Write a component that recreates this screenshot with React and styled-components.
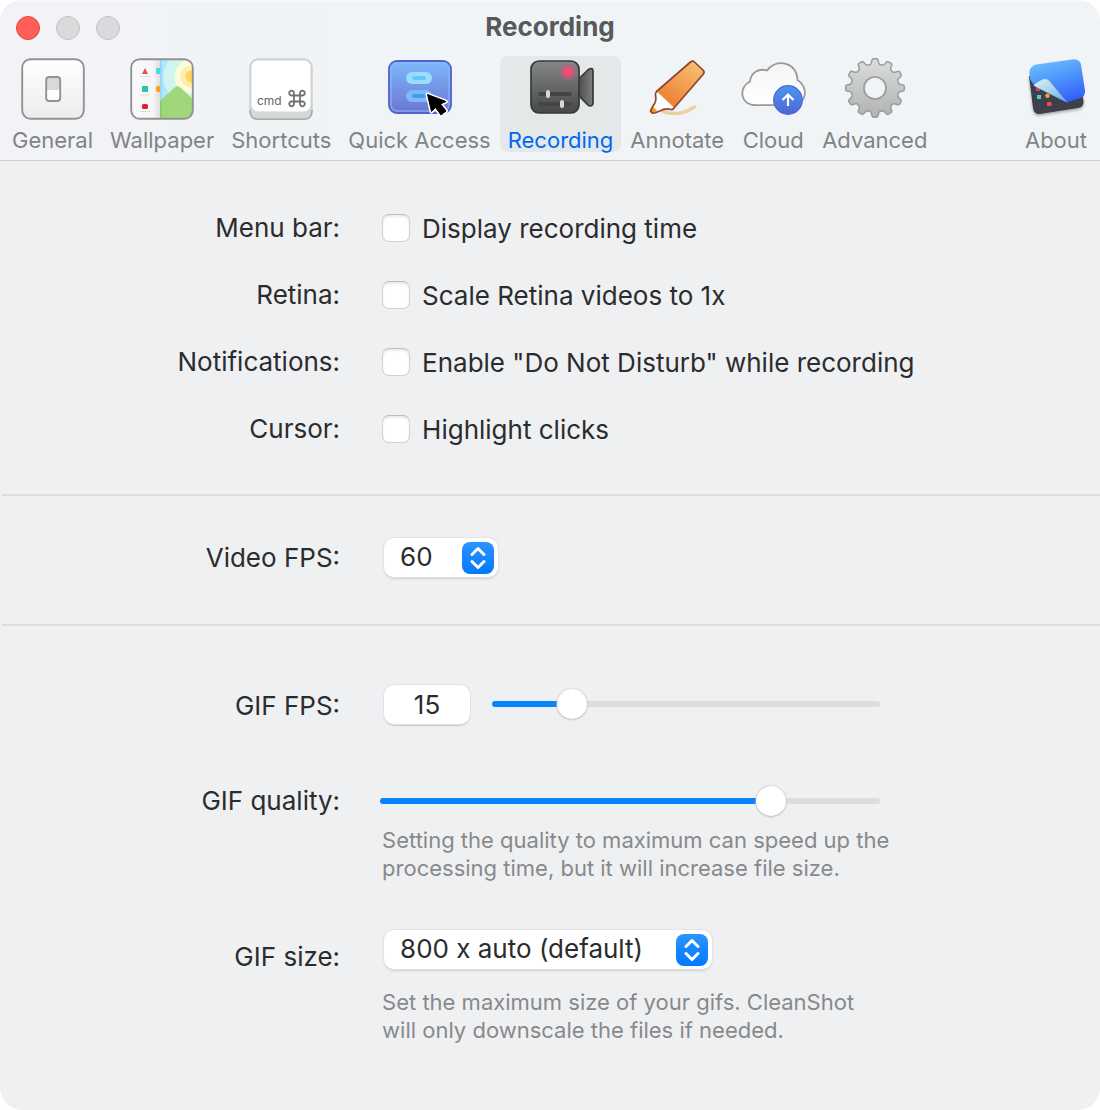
import React, { useState } from "react";
import styled, { createGlobalStyle } from "styled-components";

const GlobalStyle = createGlobalStyle`
  *, *::before, *::after { box-sizing: border-box; }
  body {
    margin: 0;
    background: #fff;
    color: #2b2c2e;
    font-family: Inter, "Liberation Sans", sans-serif;
    font-size: 26px;
    line-height: 28px;
  }
  button, input, select { margin: 0; font: inherit; color: inherit; }
`;

const Window = styled.main`
  min-height: 100vh;
  overflow: hidden;
  border-radius: 22px;
  background: #eff0f2;
`;

const Header = styled.header`
  padding: 12px 4px 8px;
  border-bottom: 1px solid #c9cbcd;
  background: linear-gradient(90deg, #f2f3f6, #f0f4f6 30%, #f0f4f6);
  box-shadow: inset 0 2px 0 #f7f8f9;
`;

const TitleBar = styled.div`
  display: grid;
  grid-template-columns: 1fr auto 1fr;
  align-items: center;
  height: 32px;
  margin-bottom: 12px;
  padding: 0 12px;
`;

const Lights = styled.div`
  display: flex;
  gap: 16px;
`;

const Light = styled.button`
  width: 24px;
  height: 24px;
  padding: 0;
  border: 1px solid ${(p) => (p.$active ? "#e2463f" : "#bfc0c1")};
  border-radius: 50%;
  background: ${(p) => (p.$active ? "#ff5f57" : "#d9dadb")};
`;

const Title = styled.h1`
  align-self: start;
  margin: 0;
  color: #58595b;
  font-size: 26px;
  font-weight: 700;
  line-height: 30px;
`;

const Toolbar = styled.nav`
  display: flex;
  gap: 1px;
`;

const Tab = styled.button`
  display: flex;
  flex-direction: column;
  align-items: center;
  gap: 7px;
  height: 96px;
  margin-left: ${(p) => (p.$last ? "auto" : "0")};
  padding: 1px 8px 0;
  border: 0;
  border-radius: 8px;
  background: ${(p) => (p.$active ? "#e4e8e9" : "transparent")};
  color: ${(p) => (p.$active ? "#0068f0" : "#828384")};
  font-size: 22px;
  line-height: 24px;
  white-space: nowrap;
`;

const Icon = styled.svg`
  display: block;
  width: 64px;
  height: 64px;
  overflow: visible;
`;

const CapText = styled.text`
  fill: #666;
  font-size: 12px;
`;

const Section = styled.section`
  display: flex;
  flex-direction: column;
  gap: ${(p) => p.$gap || 0}px;
  padding: ${(p) => p.$pad};
`;

const Divider = styled.hr`
  height: 2px;
  margin: 0 0 0 2px;
  border: 0;
  background: #dcdddf;
`;

const Row = styled.div`
  display: grid;
  grid-template-columns: minmax(0, 9fr) minmax(0, 19fr);
  column-gap: 42px;
  align-items: start;
`;

const RowLabel = styled.label`
  line-height: ${(p) => p.$line}px;
  text-align: right;
`;

const CheckLabel = styled.label`
  display: flex;
  align-items: start;
  gap: 12px;
  line-height: 30px;
  white-space: nowrap;
`;

const CheckBox = styled.input`
  appearance: none;
  flex: none;
  width: 28px;
  height: 28px;
  border: 1px solid #cfd0d2;
  border-top-color: #bcbdbf;
  border-radius: 7px;
  background: #fff;
  box-shadow: inset 0 2px 2px #ececee;
  &:checked { background: #0a82ff; }
`;

const Control = styled.div`
  display: flex;
  align-items: ${(p) => (p.$top ? "start" : "center")};
  gap: 22px;
  max-width: 498px;
  height: ${(p) => p.$height}px;
`;

const PopUp = styled.div`
  position: relative;
  margin-left: 2px;
`;

const Select = styled.select`
  appearance: none;
  display: block;
  width: ${(p) => p.$width}px;
  height: 39px;
  padding: 0 44px 2px 16px;
  border: 0;
  border-radius: 10px;
  background: #fff;
  box-shadow: 0 0 1px 1px #e2e3e5, 0 2px 2px #cbccce;
`;

const Stepper = styled.svg`
  position: absolute;
  top: 4px;
  right: 4px;
  width: 32px;
  height: 32px;
  border-radius: 8px;
  background: linear-gradient(#2d93ff, #007aff);
  pointer-events: none;
`;

const NumberBox = styled.input`
  flex: none;
  width: 86px;
  height: 39px;
  margin-left: 2px;
  padding: 0;
  border: 0;
  border-radius: 10px;
  background: #fff;
  box-shadow: 0 0 1px 1px #e2e3e5, 0 2px 1px #c6c7c9;
  text-align: center;
`;

const Range = styled.input`
  appearance: none;
  flex: 1;
  min-width: 0;
  height: 30px;
  margin-left: ${(p) => (p.$wide ? "-2px" : "0")};
  background: transparent;

  &::-webkit-slider-runnable-track {
    height: 6px;
    border-radius: 3px;
    background: linear-gradient(
      90deg,
      #0a82ff calc(15px + var(--level) * (100% - 30px)),
      #dcdddf 0
    );
  }
  &::-webkit-slider-thumb {
    appearance: none;
    width: 30px;
    height: 30px;
    margin-top: -12px;
    border-radius: 50%;
    background: #fff;
    box-shadow: 0 0 2px #b4b5b7, 0 1px 2px #c4c5c7;
  }
`;

const Help = styled.p`
  grid-column: 2;
  max-width: 510px;
  margin: ${(p) => p.$top}px 0 ${(p) => p.$bottom}px;
  color: #88898b;
  font-size: 22px;
  line-height: 28px;
`;

const GeneralIcon = () => (
  <Icon viewBox="0 0 64 64" aria-hidden="true">
    <defs>
      <linearGradient id="general" x2="0" y2="1">
        <stop stopColor="#fff" />
        <stop offset="1" stopColor="#ececec" />
      </linearGradient>
    </defs>
    <rect x="1.2" y="2.2" width="61.6" height="59.6" rx="8.5" fill="url(#general)" stroke="#929292" strokeWidth="1.9" />
    <rect x="25.2" y="20" width="14" height="24" rx="3" fill="#fff" />
    <path d="M25 33V23q0-3 3-3h8q3 0 3 3v10z" fill="#d8dad9" />
    <rect x="25.2" y="20" width="14" height="24" rx="3" fill="none" stroke="#929292" strokeWidth="1.9" />
  </Icon>
);

const WallpaperIcon = () => (
  <Icon viewBox="0 0 64 64" aria-hidden="true">
    <defs>
      <clipPath id="wallFrame"><rect x="1.2" y="2.2" width="61.6" height="59.6" rx="8.5" /></clipPath>
      <clipPath id="wallPhoto"><path d="M30 1h34v62H34q-4 0-4-4z" /></clipPath>
      <linearGradient id="wallShade" x2="1">
        <stop offset="0" stopColor="#fafafa" />
        <stop offset=".75" stopColor="#f6f6f6" />
        <stop offset="1" stopColor="#dcdcdc" />
      </linearGradient>
    </defs>
    <g clipPath="url(#wallFrame)">
      <rect width="31" height="64" fill="url(#wallShade)" />
      <path d="M10 19.5h10M10 38h10M10 54.5h10M26 19.5h5M26 38h5" stroke="#dcdcdc" />
      <path d="M15 11l3 6h-6z" fill="#e2505c" />
      <rect x="12" y="29" width="6" height="6" fill="#2cc1b4" />
      <rect x="12" y="47" width="6" height="5" rx="1.5" fill="#e71d36" />
      <rect x="26" y="11" width="6" height="6" rx="1" fill="#45dce0" />
      <circle cx="29" cy="32" r="3.2" fill="#ff9f1c" />
      <g clipPath="url(#wallPhoto)">
        <rect x="30" width="34" height="64" fill="#b2e6ff" />
        <circle cx="61.5" cy="19.5" r="28" fill="#d0f4ee" />
        <circle cx="61.5" cy="19.5" r="17" fill="#fcfcd9" />
        <circle cx="61.5" cy="19.5" r="11" fill="#ffeeab" />
        <circle cx="61.5" cy="19.5" r="6" fill="#ffd55f" />
        <path d="M29 45l15-14q3.5-3.5 7 0l14 13v20H29z" fill="#a0d77a" />
        <path d="M30 0h2v43l-2 2z" fill="#9ad6f7" />
        <path d="M30 44.5l2-2V64h-2z" fill="#8dcc66" />
      </g>
    </g>
    <rect x="1.2" y="2.2" width="61.6" height="59.6" rx="8.5" fill="none" stroke="#929292" strokeWidth="1.9" />
  </Icon>
);

const ShortcutsIcon = () => (
  <Icon viewBox="0 0 64 64" aria-hidden="true">
    <rect x="1" y="2" width="62" height="60" rx="8.5" fill="#d6d7d7" stroke="#cfd0d0" strokeWidth="1.5" />
    <path d="M1 53v1q0 8.3 8.5 8.3h45q8.5 0 8.5-8.3v-1" fill="none" stroke="#a9aaaa" strokeWidth="1.6" />
    <rect x="2.5" y="3.5" width="59" height="51" rx="6.5" fill="#fff" />
    <CapText x="8" y="48">cmd</CapText>
    <path
      d="M45 38.5h6v6h-6zM45 38.5h-2.3a2.4 2.4 0 1 1 2.3-2.3zM51 38.5v-2.3a2.4 2.4 0 1 1 2.3 2.3zM51 44.5h2.3a2.4 2.4 0 1 1-2.3 2.3zM45 44.5v2.3a2.4 2.4 0 1 1-2.3-2.3z"
      fill="none"
      stroke="#707070"
      strokeWidth="1.8"
    />
  </Icon>
);

const QuickAccessIcon = () => (
  <Icon viewBox="0 0 64 64" aria-hidden="true">
    <defs>
      <linearGradient id="quick" x2="0" y2="1">
        <stop stopColor="#7cb9fb" />
        <stop offset="1" stopColor="#6c75d2" />
      </linearGradient>
    </defs>
    <rect x="1" y="4" width="62" height="52" rx="8" fill="url(#quick)" stroke="#4f63cf" strokeWidth="1.8" />
    <rect x="3" y="6" width="58" height="48" rx="6" fill="none" stroke="#8ebcff" strokeOpacity=".5" strokeWidth="2" />
    <rect x="18" y="15" width="26" height="12" rx="6" fill="#9adcfc" />
    <rect x="24" y="19" width="14" height="4" rx="2" fill="#62c8fa" />
    <rect x="18" y="33" width="26" height="12" rx="6" fill="#7ab9fa" />
    <rect x="24" y="37" width="14" height="4" rx="2" fill="#4b99f4" />
    <path d="M39.5 37.5l4 17 4-4 5.500 7.500 5-4-5.500-7 5.500-2.500z" fill="#000" stroke="#fff" strokeWidth="4" strokeLinejoin="round" />
    <path d="M39.5 37.5l4 17 4-4 5.500 7.500 5-4-5.500-7 5.500-2.500z" fill="#000" stroke="#000" />
  </Icon>
);

const RecordingIcon = () => (
  <Icon viewBox="0 0 64 64" aria-hidden="true">
    <defs>
      <linearGradient id="camera" x2="0" y2="1">
        <stop stopColor="#858787" />
        <stop offset="1" stopColor="#474849" />
      </linearGradient>
      <linearGradient id="lens" x2="1">
        <stop stopColor="#4b4c4d" />
        <stop offset="1" stopColor="#7f8181" />
      </linearGradient>
      <radialGradient id="glow">
        <stop offset=".3" stopColor="#ff4778" stopOpacity=".65" />
        <stop offset="1" stopColor="#ff4778" stopOpacity="0" />
      </radialGradient>
    </defs>
    <path d="M49 22.5l10.5-10q4.3-2.5 4.5 1.5v32q-.2 4-4.5 2.5L49 38z" fill="url(#lens)" stroke="#373839" strokeWidth="1.7" />
    <rect x="2" y="4" width="48" height="52" rx="8" fill="url(#camera)" stroke="#373839" strokeWidth="1.7" />
    <circle cx="39" cy="15" r="10" fill="url(#glow)" />
    <circle cx="39" cy="15" r="4" fill="#ff4775" />
    <path d="M11 37h30M11 47h30" stroke="#434445" strokeWidth="3.8" strokeLinecap="round" />
    <path d="M19 35v4M33 45v4" stroke="#d7d8d8" strokeWidth="4" strokeLinecap="round" />
  </Icon>
);

const AnnotateIcon = () => (
  <Icon viewBox="0 0 64 64" aria-hidden="true">
    <defs>
      <linearGradient id="marker" x1="1" x2=".3" y2="1">
        <stop stopColor="#f9c47d" />
        <stop offset="1" stopColor="#ec7f2e" />
      </linearGradient>
    </defs>
    <path d="M18 54.5c12 4 21 2 31.5-4.5" fill="none" stroke="#edcda4" strokeWidth="3.5" strokeLinecap="round" />
    <path d="M11 35l-.5 3.5Q12 44 8 49l-2.5 5q1.5 3 5 1.8l5-2Q20 51 26 52.5l3-1.5z" fill="#fff" />
    <path d="M12 34.5L45.5 5q2-2 4 0l8.5 8q2 2 .2 4.2L29 50.500z" fill="url(#marker)" />
    <path d="M7.5 49.5l5 4.5-3 1.5q-3 .5-4-1.5z" fill="#f29a1e" />
    <path
      d="M11.5 34.5L45.5 5q2-2 4 0l8.5 8q2 2 .2 4.2L29 51q-1 1.8-3 1.5Q20 51 15.5 53.8l-5 2q-3.5 1.2-5-1.8l2.5-5q4-5 2.5-10.5-.3-2.5 1-4z"
      fill="none"
      stroke="#8f4828"
      strokeWidth="1.7"
      strokeLinejoin="round"
    />
  </Icon>
);

const CloudIcon = () => (
  <Icon viewBox="0 0 64 64" aria-hidden="true">
    <defs>
      <linearGradient id="cloud" x2="0" y2="1">
        <stop stopColor="#f5f5f5" />
        <stop offset="1" stopColor="#fff" />
      </linearGradient>
      <linearGradient id="upload" x2="0" y2="1">
        <stop stopColor="#4b96ee" />
        <stop offset="1" stopColor="#4f66d6" />
      </linearGradient>
    </defs>
    <path d="M15 48.2C-1.500 48.2-2.500 30 9 24.5C10 15 18 11 26 13.5C34 1.500 56 4 56.5 23C67.500 29 66.500 48.2 51 48.2z" fill="url(#cloud)" stroke="#999" strokeWidth="1.8" />
    <circle cx="47" cy="43" r="14.3" fill="url(#upload)" stroke="#4c69d2" strokeWidth="1.2" />
    <path d="M47 49V38M41.5 43l5.5-5.5 5.5 5.5" fill="none" stroke="#fff" strokeWidth="2.2" />
  </Icon>
);

const TEETH = 12;
const gearPoint = (radius, degrees) => {
  const a = (degrees * Math.PI) / 180;
  return `${(32 + radius * Math.sin(a)).toFixed(2)} ${(31 - radius * Math.cos(a)).toFixed(2)}`;
};
const gearPath =
  Array.from({ length: TEETH }, (_, i) => {
    const c = (i * 360) / TEETH;
    return [
      `${i ? "L" : "M"}${gearPoint(24, c - 11)}`,
      `Q${gearPoint(25, c - 8)} ${gearPoint(27, c - 7)}`,
      `Q${gearPoint(29.4, c - 6)} ${gearPoint(29.4, c - 3)}`,
      `L${gearPoint(29.4, c + 3)}`,
      `Q${gearPoint(29.4, c + 6)} ${gearPoint(27, c + 7)}`,
      `Q${gearPoint(25, c + 8)} ${gearPoint(24, c + 11)}`,
    ].join("");
  }).join("") + "Z";

const AdvancedIcon = () => (
  <Icon viewBox="0 0 64 64" aria-hidden="true">
    <defs>
      <linearGradient id="gear" x2="0" y2="1">
        <stop stopColor="#dcdddd" />
        <stop offset="1" stopColor="#b0b1b1" />
      </linearGradient>
    </defs>
    <path d={gearPath} fill="url(#gear)" stroke="#9b9c9c" strokeWidth="1.5" strokeLinejoin="round" />
    <circle cx="32" cy="31" r="11" fill="#f1f4f6" stroke="#9b9c9c" strokeWidth="1.7" />
  </Icon>
);

const AboutIcon = () => (
  <Icon viewBox="0 0 64 64" aria-hidden="true">
    <defs>
      <linearGradient id="sheet" x1=".3" x2=".7" y2="1">
        <stop stopColor="#6dbcff" />
        <stop offset=".5" stopColor="#4a91fc" />
        <stop offset="1" stopColor="#315cf8" />
      </linearGradient>
      <linearGradient id="curl" x2="1" y2="1">
        <stop stopColor="#dcf0fa" />
        <stop offset=".5" stopColor="#a9d2ea" />
        <stop offset="1" stopColor="#6f9fe0" />
      </linearGradient>
      <filter id="soft" x="-20%" y="-20%" width="140%" height="150%">
        <feDropShadow dx="0" dy="1.5" stdDeviation="1.5" floodOpacity=".35" />
      </filter>
    </defs>
    <path filter="url(#soft)" d="M5 19l4 32q1 6.5 7 6l38-6q6-1 5.5-7L57 30z" fill="#3c3f49" />
    <rect x="12" y="30" width="4" height="4" fill="#d83c74" />
    <rect x="13" y="38" width="4" height="4" fill="#41d5d0" />
    <circle cx="23.5" cy="38.8" r="2.2" fill="#ff9f2e" />
    <rect x="23" y="45" width="4.5" height="4" rx="1" fill="#f04d4f" />
    <path d="M11 29.5L6.5 23Q5 17 5.5 14q1-5 6.5-6.5L50 2.2q6 .3 7 5.3l4 26q.5 6-5.5 8L42 45.5z" fill="url(#sheet)" />
    <path d="M9.5 28.5q6.500-6 11.500-6.500 4 .3 6 4l16.500 19.500Q24 36 9.500 28.500z" fill="url(#curl)" />
  </Icon>
);

const TABS = [
  ["General", GeneralIcon],
  ["Wallpaper", WallpaperIcon],
  ["Shortcuts", ShortcutsIcon],
  ["Quick Access", QuickAccessIcon],
  ["Recording", RecordingIcon],
  ["Annotate", AnnotateIcon],
  ["Cloud", CloudIcon],
  ["Advanced", AdvancedIcon],
  ["About", AboutIcon],
];

const CHECKS = [
  ["menu-bar", "Menu bar:", "Display recording time"],
  ["retina", "Retina:", "Scale Retina videos to 1x"],
  ["notifications", "Notifications:", 'Enable "Do Not Disturb" while recording'],
  ["cursor", "Cursor:", "Highlight clicks"],
];

function PopUpButton({ id, width, options }) {
  return (
    <PopUp>
      <Select id={id} $width={width}>
        {options.map((option) => (
          <option key={option}>{option}</option>
        ))}
      </Select>
      <Stepper viewBox="0 0 32 32" aria-hidden="true">
        <path d="M10 12.5l6-6 6 6M10 19.5l6 6 6-6" fill="none" stroke="#fff" strokeWidth="3" strokeLinecap="round" strokeLinejoin="round" />
      </Stepper>
    </PopUp>
  );
}

function Slider({ min, max, value, onChange, ...rest }) {
  return (
    <Range
      type="range"
      min={min}
      max={max}
      value={value}
      onChange={(e) => onChange(Number(e.target.value))}
      style={{ "--level": (value - min) / (max - min) }}
      {...rest}
    />
  );
}

export default function App() {
  const [fps, setFps] = useState(15);
  const [quality, setQuality] = useState(80);

  return (
    <>
      <GlobalStyle />
      <Window>
        <Header>
          <TitleBar>
            <Lights>
              <Light $active aria-label="Close" />
              <Light aria-label="Minimize" disabled />
              <Light aria-label="Zoom" disabled />
            </Lights>
            <Title>Recording</Title>
          </TitleBar>
          <Toolbar>
            {TABS.map(([name, Glyph]) => (
              <Tab key={name} $active={name === "Recording"} $last={name === "About"}>
                <Glyph />
                {name}
              </Tab>
            ))}
          </Toolbar>
        </Header>

        <Section $gap={39} $pad="53px 0 51px">
          {CHECKS.map(([id, label, text]) => (
            <Row key={id}>
              <RowLabel htmlFor={id} $line={28}>{label}</RowLabel>
              <Control $height={28} $top>
                <CheckLabel>
                  <CheckBox type="checkbox" id={id} />
                  {text}
                </CheckLabel>
              </Control>
            </Row>
          ))}
        </Section>
        <Divider />

        <Section $pad="42px 0 46px">
          <Row>
            <RowLabel htmlFor="video-fps" $line={40}>Video FPS:</RowLabel>
            <Control $height={40} $top>
              <PopUpButton id="video-fps" width={114} options={["60", "30", "24"]} />
            </Control>
          </Row>
        </Section>
        <Divider />

        <Section $gap={38} $pad="58px 0">
          <Row>
            <RowLabel htmlFor="gif-fps" $line={44}>GIF FPS:</RowLabel>
            <Control $height={40}>
              <NumberBox
                id="gif-fps"
                inputMode="numeric"
                value={fps}
                onChange={(e) => setFps(Number(e.target.value) || 5)}
              />
              <Slider aria-label="GIF FPS" min={5} max={60} value={fps} onChange={setFps} />
            </Control>
          </Row>
          <Row>
            <RowLabel htmlFor="gif-quality" $line={70}>GIF quality:</RowLabel>
            <Control $height={70}>
              <Slider id="gif-quality" $wide min={0} max={100} value={quality} onChange={setQuality} />
            </Control>
            <Help $top={-10} $bottom={10}>
              Setting the quality to maximum can speed up the processing time, but it will increase file size.
            </Help>
          </Row>
          <Row>
            <RowLabel htmlFor="gif-size" $line={54}>GIF size:</RowLabel>
            <Control $height={40} $top>
              <PopUpButton
                id="gif-size"
                width={328}
                options={["800 x auto (default)", "640 x auto", "Original size"]}
              />
            </Control>
            <Help $top={4} $bottom={0}>
              Set the maximum size of your gifs. CleanShot will only downscale the files if needed.
            </Help>
          </Row>
        </Section>
      </Window>
    </>
  );
}
